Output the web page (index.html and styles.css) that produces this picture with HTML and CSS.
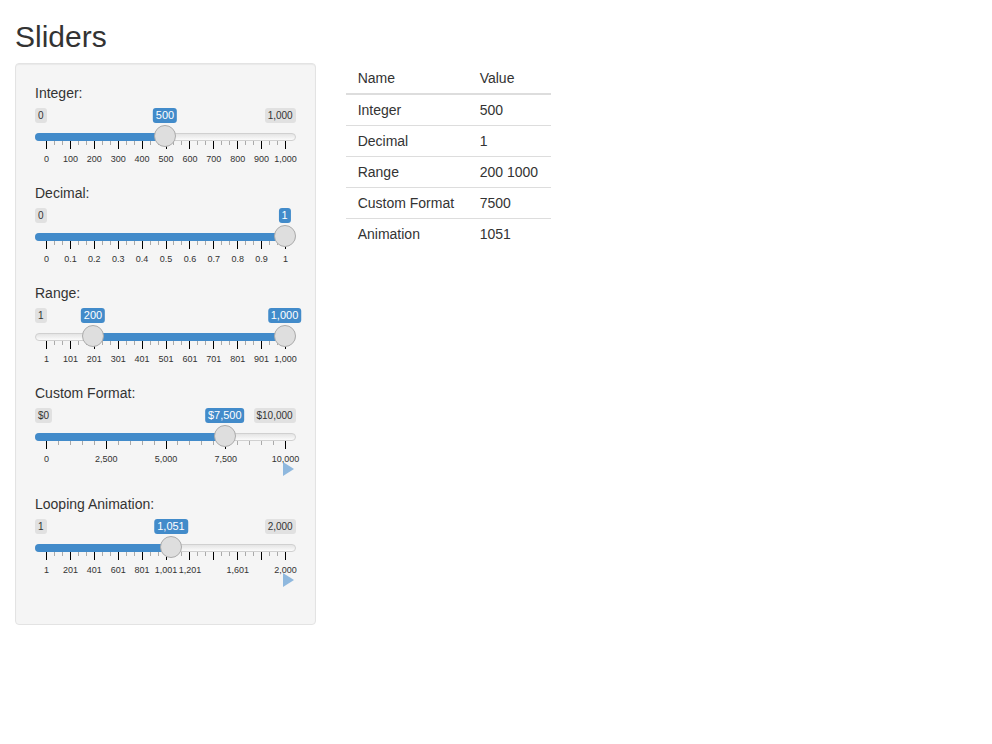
FILE: index.html
```html
<!DOCTYPE html>
<html>
    <head>
        <title>Sliders</title>
        <link rel="stylesheet" href="styles.css">
    </head>
    <body>
        <h2 class="title">Sliders</h2>
        <div class="row">
            <div class="side">
                <div class="well" id="well"></div>
            </div>
            <div class="main">
                <table class="values">
                    <thead>
                        <tr><th class="col-name">Name</th><th class="col-value">Value</th></tr>
                    </thead>
                    <tbody>
                        <tr><td>Integer</td><td>500</td></tr>
                        <tr><td>Decimal</td><td>1</td></tr>
                        <tr><td>Range</td><td>200 1000</td></tr>
                        <tr><td>Custom Format</td><td>7500</td></tr>
                        <tr><td>Animation</td><td>1051</td></tr>
                    </tbody>
                </table>
            </div>
        </div>
        <script src="script.js"></script>
    </body>
</html>
```

FILE: styles.css
```css
body{
	margin:0;
	font-family:'Liberation Sans',Arial,sans-serif;
	font-size:14px;
	line-height:20px;
	color:#333;
	background:#fff;
	}
.title{
	margin:20px 15px 10px;
	font-size:30px;
	font-weight:500;
	line-height:33px;
	}
.row{
	display:flex;
	align-items:flex-start;
	}
.side{
	box-sizing:border-box;
	width:33.3333%;
	padding:0 15px;
	}
.main{
	box-sizing:border-box;
	width:66.6667%;
	padding:0 15px;
	}
.well{
	background:#f5f5f5;
	border:1px solid #e3e3e3;
	border-radius:4px;
	box-shadow:inset 0 1px 1px rgba(0,0,0,0.05);
	padding:19px;
	}
.group{
	margin-bottom:21px;
	}
.group label{
	display:block;
	margin-bottom:5px;
	}
.slider{
	position:relative;
	height:54px;
	}
.badge{
	position:absolute;
	top:0;
	font-size:10px;
	line-height:15px;
	padding:0 3px;
	border-radius:3px;
	background:#e1e1e1;
	white-space:nowrap;
	}
.badge.max{
	right:0;
	}
.badge.from{
	font-size:11px;
	background:#428bca;
	color:#fff;
	transform:translateX(-50%);
	}
.track{
	position:absolute;
	top:25px;
	left:0;
	right:0;
	box-sizing:border-box;
	height:8px;
	border:1px solid #d0d0d0;
	border-radius:4px;
	background:linear-gradient(#e4e4e4,#fbfbfb);
	}
.bar{
	position:absolute;
	top:25px;
	height:8px;
	background:#428bca;
	}
.bar.start{
	border-radius:4px 0 0 4px;
	}
.tick{
	position:absolute;
	top:33px;
	width:1px;
	height:4px;
	background:#aaa;
	}
.tick.major{
	height:8px;
	background:#000;
	}
.tick-label{
	position:absolute;
	top:46px;
	font-size:9px;
	line-height:10px;
	color:#333;
	transform:translateX(-50%);
	white-space:nowrap;
	}
.handle{
	position:absolute;
	top:17px;
	box-sizing:border-box;
	width:22px;
	height:22px;
	margin-left:-11px;
	border:1px solid #ababab;
	border-radius:50%;
	background:#dedede;
	}
.play{
	height:11px;
	padding-right:2px;
	}
.play svg{
	display:block;
	margin-left:auto;
	}
.values{
	border-collapse:collapse;
	}
.values th{
	font-weight:normal;
	text-align:left;
	padding:5px 12px;
	border-bottom:2px solid #ddd;
	}
.values .col-name{
	width:98px;
	}
.values .col-value{
	width:59px;
	}
.values td{
	padding:5px 12px;
	border-top:1px solid #ddd;
	}
.values tbody tr:first-child td{
	border-top:0;
	}
```

FILE: script.js
```js
var sliders = [
    { label: "Integer:", min: "0", max: "1,000", lo: 0, hi: 0.5, values: ["500"],
      ticks: ["0","100","200","300","400","500","600","700","800","900","1,000"] },
    { label: "Decimal:", min: "0", max: "", lo: 0, hi: 1, values: ["1"],
      ticks: ["0","0.1","0.2","0.3","0.4","0.5","0.6","0.7","0.8","0.9","1"] },
    { label: "Range:", min: "1", max: "", lo: 0.199, hi: 1, values: ["200","1,000"], range: true,
      ticks: ["1","101","201","301","401","501","601","701","801","901","1,000"] },
    { label: "Custom Format:", min: "$0", max: "$10,000", lo: 0, hi: 0.75, values: ["$7,500"], play: true,
      ticks: ["0","2,500","5,000","7,500","10,000"] },
    { label: "Looping Animation:", min: "1", max: "2,000", lo: 0, hi: 0.525, values: ["1,051"], play: true,
      ticks: ["1","201","401","601","801","1,001","1,201","","1,601","","2,000"] }
];

// px position of a 0..1 value inside the 261px wide slider
function pos(p) {
    return 11 + 239 * p;
}

function add(parent, cls, text, left) {
    var el = document.createElement("div");
    el.className = cls;
    if (text) el.textContent = text;
    if (left != null) el.style.left = left + "px";
    parent.appendChild(el);
    return el;
}

function addHandle(box, p, value) {
    add(box, "handle", "", pos(p) - 0.5);
    add(box, "badge from", value, pos(p) - 0.5);
}

var well = document.getElementById("well");

sliders.forEach(function (s) {
    var group = add(well, "group");
    var label = document.createElement("label");
    label.textContent = s.label;
    group.appendChild(label);

    var box = add(group, "slider");
    add(box, "badge min", s.min, 0);
    if (s.max) add(box, "badge max", s.max);

    add(box, "track");
    var left = s.range ? pos(s.lo) : 0;
    var bar = add(box, s.range ? "bar" : "bar start", "", left);
    bar.style.width = (pos(s.hi) - left) + "px";

    var n = s.ticks.length - 1;
    var parts = n == 4 ? 5 : 3; // minor ticks between the major ones
    s.ticks.forEach(function (text, i) {
        var x = pos(i / n);
        add(box, "tick major", "", Math.round(x));
        if (text) add(box, "tick-label", text, x + 0.5);
        if (i < n) {
            for (var j = 1; j < parts; j++) {
                add(box, "tick", "", Math.round(pos((i + j / parts) / n)));
            }
        }
    });

    if (s.range) addHandle(box, s.lo, s.values[0]);
    addHandle(box, s.hi, s.values[s.values.length - 1]);

    if (s.play) {
        var play = add(group, "play");
        play.innerHTML = '<svg width="11" height="14" viewBox="0 0 11 14"><polygon points="0,0 11,7 0,14" fill="#8fb8de"/></svg>';
    }
});
```
